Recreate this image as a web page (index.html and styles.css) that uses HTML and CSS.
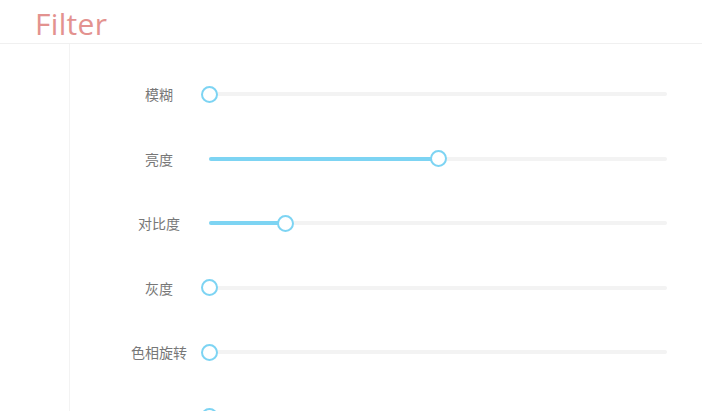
FILE: index.html
```html
<!DOCTYPE html>
<html lang="zh">
<head>
<meta charset="utf-8">
<title>Filter</title>
<link rel="stylesheet" href="styles.css">
</head>
<body>
<header class="header"><h1 class="title">Filter</h1></header>
<div class="main">
  <aside class="side"></aside>
  <section class="content">
    <div class="row"><label class="label">模糊</label><div class="slider"><div class="track"><div class="fill" style="width:0%"></div><span class="thumb" style="left:0%"></span></div></div></div>
    <div class="row"><label class="label">亮度</label><div class="slider"><div class="track"><div class="fill" style="width:50%"></div><span class="thumb" style="left:50%"></span></div></div></div>
    <div class="row"><label class="label">对比度</label><div class="slider"><div class="track"><div class="fill" style="width:16.6%"></div><span class="thumb" style="left:16.6%"></span></div></div></div>
    <div class="row"><label class="label">灰度</label><div class="slider"><div class="track"><div class="fill" style="width:0%"></div><span class="thumb" style="left:0%"></span></div></div></div>
    <div class="row"><label class="label">色相旋转</label><div class="slider"><div class="track"><div class="fill" style="width:0%"></div><span class="thumb" style="left:0%"></span></div></div></div>
    <div class="row"><label class="label"></label><div class="slider"><div class="track"><div class="fill" style="width:0%"></div><span class="thumb" style="left:0%"></span></div></div></div>
  </section>
</div>
</body>
</html>
```
FILE: styles.css
```css
* { box-sizing: border-box; }
html, body { margin: 0; padding: 0; background: #fff; overflow: hidden; height: 411px; }
body { font-family: "Noto Sans CJK SC", "Noto Sans", sans-serif; }
.header {
  height: 44px;
  border-bottom: 1px solid #f0f0f0;
  padding-left: 35px;
}
.title {
  margin: 0;
  font-family: "Open Sans", "Noto Sans", sans-serif;
  font-weight: 400;
  font-size: 30px;
  line-height: 48px;
  color: #e3928f;
  letter-spacing: 0.3px;
}
.main { display: flex; height: 367px; }
.side { width: 70px; border-right: 1px solid #f3f3f3; flex: none; }
.content { flex: 1; padding-top: 17.75px; padding-left: 49px; }
.row { height: 64.5px; display: flex; align-items: center; }
.label {
  width: 80px;
  text-align: center;
  font-size: 14px;
  color: #777;
  flex: none;
}
.slider { width: 476px; padding: 0 8px 0 10px; flex: none; }
.track {
  position: relative;
  width: 458px;
  height: 4px;
  border-radius: 2px;
  background: #f3f3f3;
}
.fill { height: 4px; border-radius: 2px; background: #7dd4f3; }
.thumb {
  position: absolute;
  top: 50%;
  width: 17px;
  height: 17px;
  margin: -8.5px 0 0 -8.5px;
  border: 2px solid #7dd4f3;
  border-radius: 50%;
  background: #fff;
}
```
